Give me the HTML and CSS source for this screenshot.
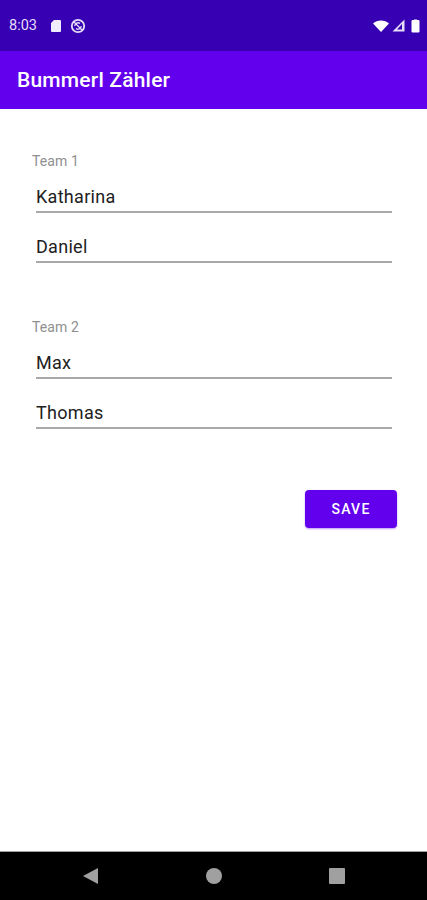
FILE: index.html
```html
<!DOCTYPE html>
<html lang="de">
<head>
<meta charset="utf-8">
<title>Bummerl Zähler</title>
<link rel="stylesheet" href="styles.css">
</head>
<body>
<div class="screen">
  <div class="status">
    <span class="time">8:03</span>
    <svg class="ic-sd" width="12" height="14" viewBox="0 0 12 14"><path d="M4 1h6a1 1 0 0 1 1 1v10a1 1 0 0 1-1 1H2a1 1 0 0 1-1-1V4z" fill="#f1ecfb"/></svg>
    <svg class="ic-sync" width="16" height="16" viewBox="0 0 16 16"><circle cx="8" cy="8" r="6.2" fill="none" stroke="#e6def8" stroke-width="1.8"/><path d="M3.500 3.500l9 9" stroke="#e6def8" stroke-width="1.300"/><path d="M4.800 8a3.200 3.200 0 0 1 5.200-2.500M11.200 8a3.200 3.200 0 0 1-5.200 2.500" fill="none" stroke="#e6def8" stroke-width="1.300"/></svg>
    <span class="spacer"></span>
    <svg class="ic-wifi" width="16" height="12" viewBox="0 0 16 12"><path d="M0 3.500C4 -.5 12 -.5 16 3.500L8 12z" fill="#fff"/></svg>
    <svg class="ic-signal" width="13" height="13" viewBox="0 0 13 13"><path d="M12.500 .5V12.500H.5z" fill="#e6def8"/><path d="M10 5V10.500H5z" fill="#3700b3"/></svg>
    <svg class="ic-batt" width="9" height="14" viewBox="0 0 9 14"><path d="M3 1V.5h3V1h1.500a1 1 0 0 1 1 1v10.500a1 1 0 0 1-1 1h-6a1 1 0 0 1-1-1V2a1 1 0 0 1 1-1z" fill="#fff"/></svg>
  </div>
  <header class="appbar">Bummerl Zähler</header>
  <main class="content">
    <section class="team">
      <h2 class="team-label">Team 1</h2>
      <div class="field">Katharina</div>
      <div class="field">Daniel</div>
    </section>
    <section class="team">
      <h2 class="team-label">Team 2</h2>
      <div class="field">Max</div>
      <div class="field">Thomas</div>
    </section>
    <div class="actions"><button class="save">SAVE</button></div>
  </main>
  <nav class="navbar">
    <svg width="17" height="18" viewBox="0 0 17 18"><path d="M16 1V17L1 9z" fill="#a0a0a0"/></svg>
    <svg width="16" height="16" viewBox="0 0 16 16"><circle cx="8" cy="8" r="8" fill="#a0a0a0"/></svg>
    <svg width="16" height="16" viewBox="0 0 16 16"><rect width="16" height="16" rx="1" fill="#a0a0a0"/></svg>
  </nav>
</div>
</body>
</html>
```
FILE: styles.css
```css
* { box-sizing: border-box; }
html, body { margin: 0; padding: 0; }
body { font-family: Roboto, "Liberation Sans", sans-serif; background: #fff; }
.screen { width: 427px; height: 900px; display: flex; flex-direction: column; overflow: hidden; }
.status { height: 51px; background: #3700b3; display: flex; align-items: center; padding: 0 7px 0 9px; color: #e6def8; }
.time { font-size: 14.500px; line-height: 16px; margin-right: 13px; }
.ic-sd { margin-right: 8px; }
.spacer { flex: 1; }
.ic-signal { margin: 0 6px 0 3px; }
.appbar { height: 58px; background: #6200ee; color: #fff; font-size: 21px; font-weight: 500; line-height: 58px; padding-left: 17px; letter-spacing: .2px; }
.content { flex: 1; padding: 44px 30px 0 32px; display: flex; flex-direction: column; }
.team { display: flex; flex-direction: column; margin-bottom: 56px; }
.team-label { margin: 0; font-size: 14px; font-weight: 400; line-height: 16px; color: #8f8f8f; letter-spacing: .1px; }
.field { display: flex; align-items: flex-end; margin: 0 5px 0 4px; height: 50px; padding-bottom: 2px; border-bottom: 2px solid #a9a9a9; font-size: 18px; line-height: 24px; letter-spacing: .3px; color: #212121; }
.team-label + .field { height: 44px; }
.actions { display: flex; justify-content: flex-end; margin-top: 5px; }
.save { width: 92px; height: 38px; border: 0; border-radius: 4px; background: #6200ee; color: #fff; font: 500 14px Roboto, sans-serif; letter-spacing: 1.250px; box-shadow: 0 1px 2px rgba(98,0,238,.4); }
.navbar { height: 49px; background: #000; border-top: 1px solid #a0a0a0; display: flex; align-items: center; justify-content: space-between; padding: 0 82px 1px; }
```
